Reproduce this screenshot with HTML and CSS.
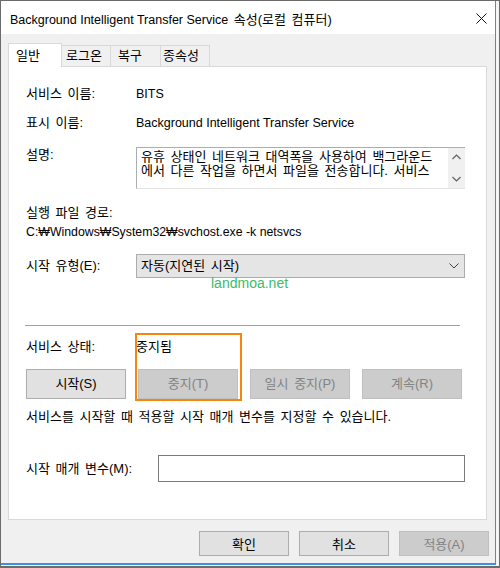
FILE: index.html
```html
<!doctype html>
<html lang="ko">
<head>
    <meta charset="UTF-8">
    <meta name="viewport" content="width=device-width, initial-scale=1.0">
    <title>BITS 속성</title>
    <link rel="stylesheet" href="styles.css">
</head>
<body>
    <div class="frame">
        <div class="window">
            <div class="titlebar">
                <span class="title"><span class="en">Background Intelligent Transfer Service</span> 속성(로컬 컴퓨터)</span>
                <svg class="close" width="11" height="11" viewBox="0 0 11 11">
                    <path d="M0.5 0.5 L10.5 10.5 M10.5 0.5 L0.5 10.5" stroke="#111" stroke-width="1" fill="none"/>
                </svg>
            </div>
            <div class="tabs">
                <div class="tab on">일반</div>
                <div class="tab t2">로그온</div>
                <div class="tab t3">복구</div>
                <div class="tab t4">종속성</div>
            </div>
            <div class="panel">
                <div class="row r1"><span class="label">서비스 이름:</span><span class="en">BITS</span></div>
                <div class="row r2"><span class="label">표시 이름:</span><span class="en">Background Intelligent Transfer Service</span></div>
                <div class="row r3">
                    <span class="label">설명:</span>
                    <div class="desc">
                        <div class="desc-text">
                            <div>유휴 상태인 네트워크 대역폭을 사용하여 백그라운드</div>
                            <div>에서 다른 작업을 하면서 파일을 전송합니다. 서비스</div>
                        </div>
                        <div class="scroll">
                            <svg width="9" height="6" viewBox="0 0 9 6"><path d="M0.5 5 L4.5 1 L8.5 5" stroke="#606060" stroke-width="1.2" fill="none"/></svg>
                            <svg width="9" height="6" viewBox="0 0 9 6"><path d="M0.5 1 L4.5 5 L8.5 1" stroke="#606060" stroke-width="1.2" fill="none"/></svg>
                        </div>
                    </div>
                </div>
                <div class="row r4"><span class="label">실행 파일 경로:</span></div>
                <div class="row r5"><span class="en path">C:₩Windows₩System32₩svchost.exe -k netsvcs</span></div>
                <div class="row r6">
                    <span class="label">시작 유형(E):</span>
                    <div class="select">
                        <span>자동(지연된 시작)</span>
                        <svg width="10" height="6" viewBox="0 0 10 6"><path d="M0.5 0.5 L5 5 L9.5 0.5" stroke="#404040" stroke-width="1" fill="none"/></svg>
                    </div>
                </div>
                <div class="watermark">landmoa.net</div>
                <div class="sep"></div>
                <div class="row r7"><span class="label">서비스 상태:</span><span>중지됨</span></div>
                <div class="row btns">
                    <div class="btn">시작(S)</div>
                    <div class="btn off">중지(T)</div>
                    <div class="btn off">일시 중지(P)</div>
                    <div class="btn off">계속(R)</div>
                </div>
                <div class="mark"></div>
                <div class="row r8"><span>서비스를 시작할 때 적용할 시작 매개 변수를 지정할 수 있습니다.</span></div>
                <div class="row r9">
                    <span class="label wide">시작 매개 변수(M):</span>
                    <div class="input"></div>
                </div>
            </div>
            <div class="actions">
                <div class="btn">확인</div>
                <div class="btn">취소</div>
                <div class="btn off">적용(A)</div>
            </div>
        </div>
    </div>
</body>
</html>
```

FILE: styles.css
```css
*{
    margin:0;
    padding:0;
    box-sizing:border-box;
}
body{
    font-family:"Liberation Sans","Noto Sans CJK KR",sans-serif;
    font-size:13px;
    word-spacing:2px;
    color:#000;
    background:#fff;
}
/* latin runs are a touch smaller than the hangul ones */
.en{
    font-size:12.5px;
    word-spacing:0;
}
.en.path{
    font-size:12.3px;
}
.frame{
    width:500px;
    height:568px;
    border:1px solid #6b6b6b;
    border-bottom-width:2px;
    background:#f4f4f4;
}
.window{
    width:495px;
    height:564px;
    background:#f0f0f0;
    border-right:1px solid #3c8fe4;
    border-bottom:2px solid #3c8fe4;
    display:flex;
    flex-direction:column;
}
.titlebar{
    height:33px;
    flex:none;
    background:#fff;
    display:flex;
    align-items:center;
    justify-content:space-between;
    padding:2px 8px 0 9px;
}
.tabs{
    display:flex;
    align-items:flex-end;
    height:23px;
    margin:9px 0 0 7px;
    flex:none;
}
.tab{
    height:21px;
    line-height:19px;
    background:#f0f0f0;
    border:1px solid #d9d9d9;
    border-bottom:none;
    margin-left:-1px;
}
.tab.on{
    position:relative;
    z-index:1;
    height:24px;
    line-height:23px;
    margin-left:0;
    margin-bottom:-1px;
    width:54px;
    padding-left:7px;
    background:#fff;
}
.tab.t2{ width:50px; padding-left:4px; }
.tab.t3{ width:51px; padding-left:7px; }
.tab.t4{ width:50px; padding-left:2px; }
.panel{
    position:relative;
    height:454px;
    flex:none;
    margin:0 8px 0 7px;
    background:#fff;
    border:1px solid #d9d9d9;
    padding:0 21px 0 17px;
    display:flex;
    flex-direction:column;
}
.row{
    display:flex;
    align-items:center;
    line-height:18px;
    height:18px;
}
.label{
    width:110px;
    flex:none;
}
.label.wide{
    width:132px;
}
.r1{ margin-top:18px; }
.r2{ margin-top:11px; }
.r3{
    margin-top:15px;
    height:42px;
    align-items:flex-start;
}
.r3 .label{
    line-height:14px;
    margin-top:1px;
}
.desc{
    flex:1;
    height:42px;
    border:1px solid #abadb3;
    border-right:none;
    border-bottom-color:#e3e3e3;
    display:flex;
}
.desc-text{
    flex:1;
    padding:2px 0 0 4px;
    line-height:14px;
    overflow:hidden;
    white-space:nowrap;
}
.scroll{
    width:17px;
    flex:none;
    background:#f0f0f0;
    display:flex;
    flex-direction:column;
    justify-content:space-between;
    align-items:center;
    padding:6px 0 6px 0;
}
.r4{ margin-top:15px; }
.r5{ margin-top:1px; }
.r6{
    margin-top:13px;
    height:24px;
}
.select{
    flex:1;
    height:24px;
    background:#e5e5e5;
    border:1px solid #acacac;
    display:flex;
    align-items:center;
    justify-content:space-between;
    padding:0 5px 0 4px;
}
.watermark{
    position:absolute;
    left:202px;
    top:208px;
    font-size:14px;
    line-height:16px;
    word-spacing:0;
    color:#3cbb6c;
}
.sep{
    margin:47px 5px 0 -1px;
    height:1px;
    background:#a0a0a0;
    flex:none;
}
.r7{ margin-top:12px; }
.btns{
    margin-top:13px;
    height:30px;
    gap:12px;
}
.btn{
    width:100px;
    height:30px;
    border:1px solid #adadad;
    background:#e1e1e1;
    display:flex;
    align-items:center;
    justify-content:center;
}
.btn.off{
    background:#cccccc;
    border-color:#bfbfbf;
    color:#838383;
}
.mark{
    position:absolute;
    left:126px;
    top:266px;
    width:107px;
    height:68px;
    border:2px solid #f7860c;
}
.r8{ margin-top:9px; }
.r9{
    margin-top:29px;
    height:27px;
}
.input{
    flex:1;
    height:27px;
    border:1px solid #7a7a7a;
    background:#fff;
}
.actions{
    display:flex;
    justify-content:flex-end;
    gap:10px;
    margin-top:11px;
    padding-right:6px;
}
.actions .btn{
    width:90px;
    height:25px;
}
```
